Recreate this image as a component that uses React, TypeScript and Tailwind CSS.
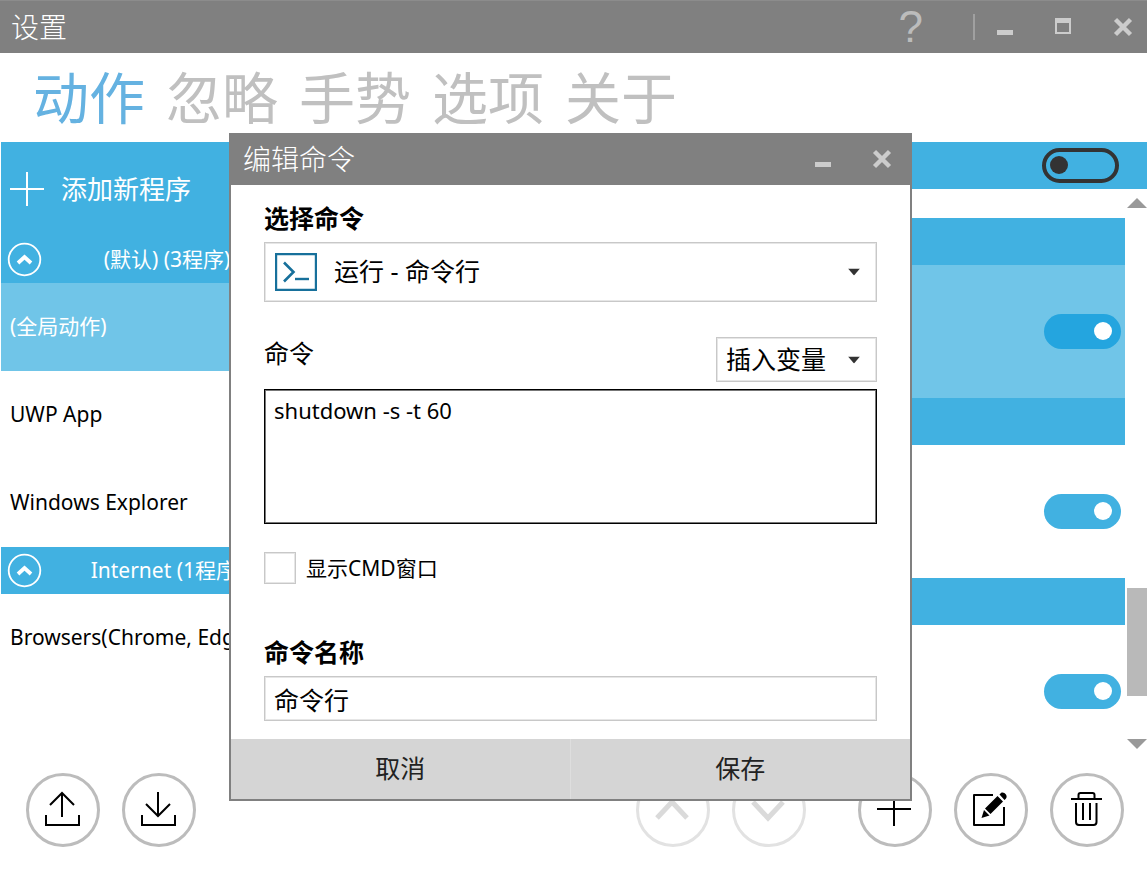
import { ReactNode, useState } from "react";

const tabs = ["动作", "忽略", "手势", "选项", "关于"];

const groups = [
    { title: "(默认) (3程序)", apps: ["(全局动作)", "UWP App", "Windows Explorer"] },
    { title: "Internet (1程序)", apps: ["Browsers(Chrome, Edge)"] }
];

const actions = [
    { id: 1, selected: true },
    { id: 2, selected: false },
    { id: 3, selected: false }
];

// soft two-step border shared by the form fields
const fieldBorder = "border border-[#c8c8c8] shadow-[inset_0_0_0_1px_#e6e6e6]";

const WindowButton = ({ label, children }: { label: string, children: ReactNode }) => (
    <button aria-label={label} className="w-12 h-full flex items-center justify-center">
        {children}
    </button>
);

const MinimizeIcon = () => (
    <svg width="20" height="20" viewBox="0 0 20 20">
        <path d="M2 13h16v5H2z" fill="#ccc" />
    </svg>
);

const MaximizeIcon = () => (
    <svg width="20" height="20" viewBox="0 0 20 20">
        <path fillRule="evenodd" d="M1 1h16v16H1zM3 6v9h12V6z" fill="#ccc" />
    </svg>
);

const CloseIcon = () => (
    <svg width="20" height="20" viewBox="0 0 20 20">
        <path d="M2.500 2.500l15 15M17.500 2.500l-15 15" stroke="#ccc" strokeWidth="4.400" fill="none" />
    </svg>
);

const CaretDown = () => (
    <svg width="12" height="7" viewBox="0 0 12 7" className="absolute right-[17px] top-1/2 -translate-y-1/2 pointer-events-none">
        <path d="M0 0h12L6 7z" fill="#333" />
    </svg>
);

const RoundButton = ({ label, disabled, children }: {
    label: string,
    disabled?: boolean,
    children: ReactNode
}) => (
    <button
        aria-label={label}
        disabled={disabled}
        className="size-[74px] shrink-0 rounded-full border-[3px] border-[#bcbcbc] disabled:border-[#e2e2e2] bg-white flex items-center justify-center"
    >
        <svg width="40" height="40" viewBox="0 0 40 40" fill="none" stroke="#000" strokeWidth="2">
            {children}
        </svg>
    </button>
);

const Toggle = ({ label, on, strong }: { label: string, on: boolean, strong?: boolean }) => (
    <input
        type="checkbox"
        aria-label={label}
        defaultChecked={on}
        className={`relative appearance-none w-[77px] h-[35px] shrink-0 rounded-full border-4 border-[#333] checked:border-0 before:absolute before:content-[''] before:size-[18px] before:rounded-full before:bg-[#333] before:left-1 before:top-1 checked:before:bg-white checked:before:left-[50px] checked:before:top-2 ${strong ? "checked:bg-[#24a5df]" : "checked:bg-[#41b1e1]"}`}
    />
);

const Sidebar = () => (
    <aside className="w-[292px] shrink-0 pl-px">
        <button className="w-full h-[94px] bg-[#41b1e1] text-white text-[26px] flex items-center gap-4 pl-[9px]">
            <svg width="35" height="35" viewBox="0 0 35 35">
                <path d="M17 0v34M0 17h34" stroke="#fff" strokeWidth="2" />
            </svg>
            添加新程序
        </button>
        {groups.map((g) => (
            <section key={g.title}>
                <button className="w-full h-[47px] bg-[#41b1e1] text-white text-[21px] flex items-center pl-[6px]">
                    <svg width="35" height="35" viewBox="0 0 35 35" fill="none" stroke="#fff">
                        <circle cx="17.500" cy="17.500" r="15.800" strokeWidth="1.800" />
                        <path d="M11 21l6.500-6 6.500 6" strokeWidth="3.800" />
                    </svg>
                    <span className="flex-1 text-center">{g.title}</span>
                </button>
                {g.apps.map((a) => (
                    <div
                        key={a}
                        className={`h-[88px] flex items-center pl-[9px] text-[21px] whitespace-nowrap ${a === "(全局动作)" ? "bg-[#70c5e8] text-white" : "text-black"}`}
                    >
                        {a}
                    </div>
                ))}
            </section>
        ))}
    </aside>
);

const ActionList = () => (
    <div className="flex-1 min-w-0 flex flex-col">
        <div className="h-[47px] bg-[#41b1e1] flex items-center justify-end pr-7">
            <Toggle label="全部启用" on={false} />
        </div>
        <div className="flex-1 flex gap-[2px]">
            <div className="flex-1 pt-[29px]">
                {actions.map((a) => (
                    <section key={a.id}>
                        <div className="h-[47px] bg-[#41b1e1]" />
                        <div className={`h-[133px] flex items-center justify-end pr-1 ${a.selected ? "bg-[#70c5e8]" : ""}`}>
                            <Toggle label="启用" on={true} strong={a.selected} />
                        </div>
                    </section>
                ))}
            </div>
            <div className="w-5 flex flex-col items-center pt-[9px] pb-[9px]">
                <svg width="20" height="10" viewBox="0 0 20 10">
                    <path d="M0 10L10 0l10 10z" fill="#999" />
                </svg>
                <div className="w-full mt-auto mb-[43px] h-[108px] bg-[#b9b9b9]" />
                <svg width="20" height="10" viewBox="0 0 20 10">
                    <path d="M0 0h20L10 10z" fill="#999" />
                </svg>
            </div>
        </div>
    </div>
);

const Toolbar = () => (
    <footer className="flex items-center justify-between pt-[15px] pb-[23px] pl-[26px] pr-[23px]">
        <div className="flex gap-[22px]">
            <RoundButton label="导出">
                <path d="M19 27V3M7 15L19 3l12 12M3 25v10h33V25" />
            </RoundButton>
            <RoundButton label="导入">
                <path d="M19 2v24M7 14l12 12 12-12M3 25v10h33V25" />
            </RoundButton>
        </div>
        <div className="flex gap-[22px]">
            <RoundButton label="上移" disabled>
                <path d="M4 28l15-16 15 16" stroke="#dadada" strokeWidth="5" />
            </RoundButton>
            <RoundButton label="下移" disabled>
                <path d="M4 12l15 16 15-16" stroke="#dadada" strokeWidth="5" />
            </RoundButton>
            <div className="w-[8px]" />
            <RoundButton label="添加">
                <path d="M19 2v34M2 19h34" />
            </RoundButton>
            <RoundButton label="编辑">
                <path d="M22 5H3v30h30V17" strokeLinejoin="round" />
                <path d="M10.500 28l2.500-8 5.500 5.500zM14 18.500L26.500 6l5.500 5.500L19.500 24zM28.500 4.500l1.500-1.500c2.500-2 7.500 2.500 5 5.500l-1.500 1.500z" fill="#000" stroke="none" />
            </RoundButton>
            <RoundButton label="删除">
                <path d="M4 9h31M11.500 9V5q0-2 2-2h12q2 0 2 2v4M9 13v19q0 3 3 3h14.500q3 0 3-3V13" />
                <path d="M16 13v17M23 13v17" />
            </RoundButton>
        </div>
    </footer>
);

const EditCommandDialog = () => {
    const [command, setCommand] = useState("shutdown -s -t 60");
    const [name, setName] = useState("命令行");

    return (
        <div role="dialog" aria-label="编辑命令" className="w-[683px] border-2 border-t-0 border-[#808080] bg-white text-[25px] text-black">
            <div className="h-[52px] bg-[#808080] flex items-center gap-[11px] pl-3 pr-1">
                <h2 className="flex-1 text-[28px] font-light text-white">编辑命令</h2>
                <WindowButton label="最小化"><MinimizeIcon /></WindowButton>
                <WindowButton label="关闭"><CloseIcon /></WindowButton>
            </div>

            <div className="px-[33px] pt-[17px] pb-[18px]">
                <label htmlFor="command-type" className="block leading-8 font-bold">选择命令</label>
                <div className="relative mt-2">
                    <svg width="42" height="38" viewBox="0 0 42 38" fill="none" stroke="#17709b" className="absolute left-[11px] top-[11px] pointer-events-none">
                        <path d="M1 1h40v36H1z" strokeWidth="2.400" />
                        <path d="M9 9.500l9.500 9.500L9 28.500" strokeWidth="2.600" />
                        <path d="M20 26h14" strokeWidth="2.400" />
                    </svg>
                    <select id="command-type" className={`appearance-none w-full h-[60px] pl-[69px] bg-transparent ${fieldBorder}`}>
                        <option>运行 - 命令行</option>
                    </select>
                    <CaretDown />
                </div>

                <div className="mt-[35px] flex items-start justify-between">
                    <label htmlFor="command" className="leading-8">命令</label>
                    <div className="relative">
                        <select aria-label="插入变量" className={`appearance-none w-[161px] h-[45px] pl-[9px] bg-transparent ${fieldBorder}`}>
                            <option>插入变量</option>
                        </select>
                        <CaretDown />
                    </div>
                </div>
                <textarea
                    id="command"
                    value={command}
                    onChange={(e) => setCommand(e.target.value)}
                    className="block mt-[7px] w-full h-[135px] resize-none border border-black shadow-[inset_0_0_0_1px_#777] px-[9px] py-1 text-[22px] leading-8 outline-none"
                />

                <label className="mt-7 flex items-center gap-[10px] text-[21px] leading-8">
                    <input type="checkbox" className={`appearance-none size-8 ${fieldBorder}`} />
                    显示CMD窗口
                </label>

                <label htmlFor="command-name" className="block mt-[52px] leading-8 font-bold">命令名称</label>
                <input
                    id="command-name"
                    value={name}
                    onChange={(e) => setName(e.target.value)}
                    className={`block mt-2 w-full h-[45px] px-[9px] outline-none ${fieldBorder}`}
                />
            </div>

            <div className="grid grid-cols-2 bg-[#d5d5d5] text-[#222]">
                <button className="h-[60px] border-r border-[#dedede]">取消</button>
                <button className="h-[60px]">保存</button>
            </div>
        </div>
    );
};

export default function App() {
    const [tab, setTab] = useState("动作");

    return (
        <div className="relative min-h-screen flex flex-col bg-white font-['Noto_Sans','Noto_Sans_CJK_SC',sans-serif]">
            <header className="h-[53px] bg-[#808080] border-t border-[#8c8c8c] flex items-center pl-[11px]">
                <h1 className="flex-1 text-[28px] font-light text-white">设置</h1>
                <button aria-label="帮助" className="px-[50px] font-['Liberation_Sans',sans-serif] text-[44px] leading-none text-[#bcbcbc]">?</button>
                <div className="w-[2px] h-[26px] mr-[6px] bg-[#a0a0a0]" />
                <div className="h-full flex gap-[11px]">
                    <WindowButton label="最小化"><MinimizeIcon /></WindowButton>
                    <WindowButton label="最大化"><MaximizeIcon /></WindowButton>
                    <WindowButton label="关闭"><CloseIcon /></WindowButton>
                </div>
            </header>

            <nav className="h-[89px] flex items-center gap-[21px] pl-[33px] pb-px">
                {tabs.map((t) => (
                    <button
                        key={t}
                        onClick={() => setTab(t)}
                        className={`text-[56px] leading-none ${t === tab ? "text-[#65b2e1]" : "text-[#c0c0c0]"}`}
                    >
                        {t}
                    </button>
                ))}
            </nav>

            <main className="flex-1 flex overflow-hidden">
                <Sidebar />
                <ActionList />
            </main>

            <Toolbar />

            <div className="absolute inset-x-0 top-[133px] flex justify-center pr-[6px]">
                <EditCommandDialog />
            </div>
        </div>
    );
}
